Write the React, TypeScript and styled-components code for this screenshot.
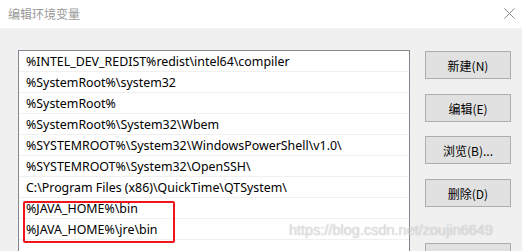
import React from 'react';
import styled, { createGlobalStyle } from 'styled-components';

const GlobalStyle = createGlobalStyle`
    html, body {
        margin: 0;
        padding: 0;
        background: #f0f0f0;
    }
    body {
        font-family: 'Noto Sans', 'Noto Sans CJK SC', sans-serif;
        font-size: 12px;
        color: #000;
    }
`;

const Window = styled.div`
    width: 522px;
    height: 251px;
    overflow: hidden;
    display: flex;
    flex-direction: column;
    background: #f0f0f0;
`;

const TitleBar = styled.div`
    height: 29px;
    flex-shrink: 0;
    background: #fff;
    border-bottom: 1px solid #f4f4f4;
    box-sizing: border-box;
    display: flex;
    align-items: center;
    justify-content: space-between;
    padding: 0 7px 2px 8px;
`;

const Title = styled.span`
    font-family: 'Noto Sans CJK SC', sans-serif;
    font-size: 12px;
    color: #9a9a9a;
`;

const Close = styled.svg`
    width: 11px;
    height: 11px;
`;

const Body = styled.div`
    position: relative;
    flex: 1;
    display: flex;
    align-items: flex-start;
    gap: 15px;
    padding: 21px 0 0 18px;
`;

const List = styled.div`
    position: relative;
    width: 392px;
    height: 240px;
    flex-shrink: 0;
    box-sizing: border-box;
    border: 1px solid #828790;
    background: #fff;
`;

const Row = styled.div`
    height: 21px;
    box-sizing: border-box;
    border-bottom: 1px solid #f0f0f0;
    padding: 1px 0 0 7px;
    font-size: 12.4px;
    line-height: 20px;
    white-space: nowrap;
    overflow: hidden;
`;

const Highlight = styled.div`
    position: absolute;
    left: 4px;
    top: 150px;
    width: 152px;
    height: 42px;
    box-sizing: border-box;
    border: 2px solid #f0141c;
    border-radius: 2px;
`;

const Buttons = styled.div`
    display: flex;
    flex-direction: column;
    padding-top: 1px;
`;

const Button = styled.button<{ gap: number }>`
    width: 86px;
    height: 28px;
    margin-top: ${({ gap }) => gap}px;
    box-sizing: border-box;
    border: 1px solid #adadad;
    background: #e1e1e1;
    font-family: 'Noto Sans CJK SC', sans-serif;
    font-size: 12px;
    color: #000;
    padding: 0;
`;

const Watermark = styled.div`
    position: absolute;
    left: 289px;
    top: 193px;
    font-family: 'Liberation Sans', sans-serif;
    font-size: 14.5px;
    color: rgba(255, 255, 255, 0.55);
    text-shadow: 0 0 1px rgba(120, 120, 120, 0.6);
    pointer-events: none;
    white-space: nowrap;
`;

const paths = [
    '%INTEL_DEV_REDIST%redist\\intel64\\compiler',
    '%SystemRoot%\\system32',
    '%SystemRoot%',
    '%SystemRoot%\\System32\\Wbem',
    '%SYSTEMROOT%\\System32\\WindowsPowerShell\\v1.0\\',
    '%SYSTEMROOT%\\System32\\OpenSSH\\',
    'C:\\Program Files (x86)\\QuickTime\\QTSystem\\',
    '%JAVA_HOME%\\bin',
    '%JAVA_HOME%\\jre\\bin',
    '',
    '',
];

const actions = [
    { label: '新建(N)', gap: 0 },
    { label: '编辑(E)', gap: 15 },
    { label: '浏览(B)...', gap: 14 },
    { label: '删除(D)', gap: 15 },
    { label: '', gap: 36 },
];

export default function App() {
    return (
        <>
            <GlobalStyle />
            <Window>
                <TitleBar>
                    <Title>编辑环境变量</Title>
                    <Close viewBox="0 0 11 11">
                        <path d="M0.5 0.5 L10.5 10.5 M10.5 0.5 L0.5 10.5" stroke="#8a8a8a" strokeWidth="1" />
                    </Close>
                </TitleBar>
                <Body>
                    <List>
                        {paths.map((p, i) => (
                            <Row key={i}>{p}</Row>
                        ))}
                        <Highlight />
                    </List>
                    <Buttons>
                        {actions.map((a, i) => (
                            <Button key={i} gap={a.gap}>
                                {a.label}
                            </Button>
                        ))}
                    </Buttons>
                    <Watermark>https://blog.csdn.net/zoujin6649</Watermark>
                </Body>
            </Window>
        </>
    );
}
